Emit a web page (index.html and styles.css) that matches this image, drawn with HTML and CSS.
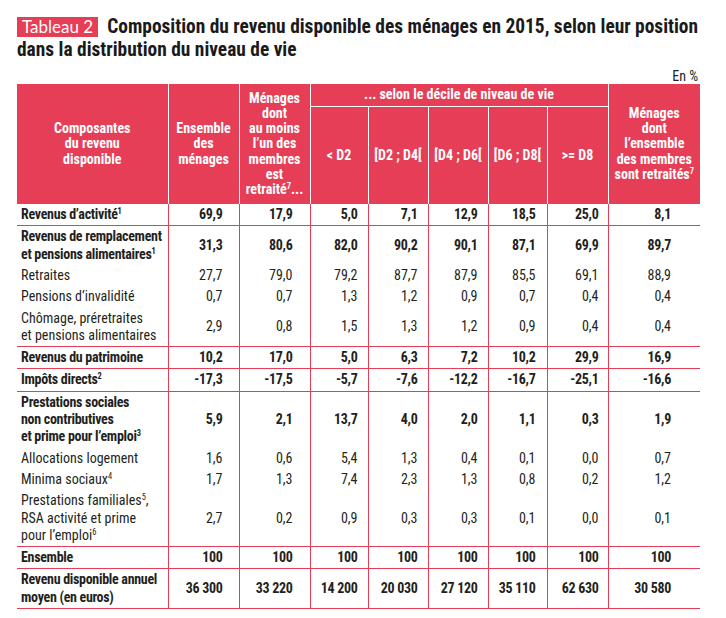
FILE: index.html
```html
<!DOCTYPE html>
<html lang="fr">
<head>
<meta charset="utf-8">
<title>Tableau 2</title>
<link rel="stylesheet" href="styles.css">
</head>
<body>
<div class="page">
  <h1 class="title"><span class="badge">Tableau 2</span>Composition du revenu disponible des ménages en 2015, selon leur position<br>dans la distribution du niveau de vie</h1>
  <div class="unit">En %</div>
  <table class="data">
    <colgroup>
      <col class="w1"><col class="w2"><col class="w3"><col class="w4"><col class="w5"><col class="w6"><col class="w7"><col class="w8"><col class="w9">
    </colgroup>
    <thead>
      <tr>
        <th rowspan="2" class="first">Composantes<br>du revenu<br>disponible</th>
        <th rowspan="2">Ensemble<br>des<br>ménages</th>
        <th rowspan="2">Ménages<br>dont<br>au moins<br>l’un des<br>membres<br>est<br>retraité<sup>7</sup>...</th>
        <th colspan="5" class="group">... selon le décile de niveau de vie</th>
        <th rowspan="2">Ménages<br>dont<br>l’ensemble<br>des membres<br>sont retraités<sup>7</sup></th>
      </tr>
      <tr class="sub">
        <th>&lt; D2</th>
        <th>[D2 ; D4[</th>
        <th>[D4 ; D6[</th>
        <th>[D6 ; D8[</th>
        <th>&gt;= D8</th>
      </tr>
    </thead>
    <tbody>
      <tr class="main sep">
        <td class="label">Revenus d’activité<sup>1</sup></td>
        <td>69,9</td><td>17,9</td><td>5,0</td><td>7,1</td><td>12,9</td><td>18,5</td><td>25,0</td><td>8,1</td>
      </tr>
      <tr class="main">
        <td class="label">Revenus de remplacement<br>et pensions alimentaires<sup>1</sup></td>
        <td>31,3</td><td>80,6</td><td>82,0</td><td>90,2</td><td>90,1</td><td>87,1</td><td>69,9</td><td>89,7</td>
      </tr>
      <tr>
        <td class="label">Retraites</td>
        <td>27,7</td><td>79,0</td><td>79,2</td><td>87,7</td><td>87,9</td><td>85,5</td><td>69,1</td><td>88,9</td>
      </tr>
      <tr>
        <td class="label">Pensions d’invalidité</td>
        <td>0,7</td><td>0,7</td><td>1,3</td><td>1,2</td><td>0,9</td><td>0,7</td><td>0,4</td><td>0,4</td>
      </tr>
      <tr class="sep">
        <td class="label">Chômage, préretraites<br>et pensions alimentaires</td>
        <td>2,9</td><td>0,8</td><td>1,5</td><td>1,3</td><td>1,2</td><td>0,9</td><td>0,4</td><td>0,4</td>
      </tr>
      <tr class="main sep">
        <td class="label">Revenus du patrimoine</td>
        <td>10,2</td><td>17,0</td><td>5,0</td><td>6,3</td><td>7,2</td><td>10,2</td><td>29,9</td><td>16,9</td>
      </tr>
      <tr class="main sep">
        <td class="label">Impôts directs<sup>2</sup></td>
        <td>-17,3</td><td>-17,5</td><td>-5,7</td><td>-7,6</td><td>-12,2</td><td>-16,7</td><td>-25,1</td><td>-16,6</td>
      </tr>
      <tr class="main">
        <td class="label">Prestations sociales<br>non contributives<br>et prime pour l’emploi<sup>3</sup></td>
        <td>5,9</td><td>2,1</td><td>13,7</td><td>4,0</td><td>2,0</td><td>1,1</td><td>0,3</td><td>1,9</td>
      </tr>
      <tr>
        <td class="label">Allocations logement</td>
        <td>1,6</td><td>0,6</td><td>5,4</td><td>1,3</td><td>0,4</td><td>0,1</td><td>0,0</td><td>0,7</td>
      </tr>
      <tr>
        <td class="label">Minima sociaux<sup>4</sup></td>
        <td>1,7</td><td>1,3</td><td>7,4</td><td>2,3</td><td>1,3</td><td>0,8</td><td>0,2</td><td>1,2</td>
      </tr>
      <tr class="sep">
        <td class="label">Prestations familiales<sup>5</sup>,<br>RSA activité et prime<br>pour l’emploi<sup>6</sup></td>
        <td>2,7</td><td>0,2</td><td>0,9</td><td>0,3</td><td>0,3</td><td>0,1</td><td>0,0</td><td>0,1</td>
      </tr>
      <tr class="main sep">
        <td class="label">Ensemble</td>
        <td>100</td><td>100</td><td>100</td><td>100</td><td>100</td><td>100</td><td>100</td><td>100</td>
      </tr>
      <tr class="main sep">
        <td class="label">Revenu disponible annuel<br>moyen (en euros)</td>
        <td>36 300</td><td>33 220</td><td>14 200</td><td>20 030</td><td>27 120</td><td>35 110</td><td>62 630</td><td>30 580</td>
      </tr>
    </tbody>
  </table>
</div>
</body>
</html>
```

FILE: styles.css
```css
body {
  margin: 0;
  background: #ffffff;
  color: #231f20;
  font-family: "Roboto Condensed", "DejaVu Sans Condensed", sans-serif;
}

.page {
  padding: 15px 0 0 17px;
  width: 683px;
}

.title {
  margin: 0;
  font-size: 19.4px;
  line-height: 23px;
  font-weight: bold;
  color: #1a1a1a;
}

.badge {
  display: inline-block;
  background: #e53e56;
  color: #ffffff;
  font-family: Lato, "Open Sans", sans-serif;
  font-weight: normal;
  font-size: 17px;
  line-height: 20px;
  padding: 0 5px;
  margin-right: 9px;
}

.unit {
  text-align: right;
  font-size: 14px;
  line-height: 15px;
  margin-top: 8px;
  padding-right: 2px;
}

table.data {
  border-collapse: collapse;
  table-layout: fixed;
  width: 683px;
  font-size: 14px;
  white-space: nowrap;
}

.w1 { width: 151px; }
.w2 { width: 71px; }
.w3 { width: 71px; }
.w4 { width: 58px; }
.w5 { width: 60px; }
.w6 { width: 60px; }
.w7 { width: 59px; }
.w8 { width: 61px; }
.w9 { width: 92px; }

th {
  background: #e53e56;
  color: #ffffff;
  font-weight: bold;
  line-height: 15.3px;
  padding: 6.5px 0;
  text-align: center;
  vertical-align: middle;
  border-left: 1px solid #ffffff;
}

th.first {
  border-left: none;
}

th.group {
  height: 22px;
  padding: 0;
}

tr.sub th {
  border-top: 1px solid #ffffff;
}

td {
  line-height: 17.3px;
  padding: 2px 0;
  text-align: right;
  vertical-align: middle;
  border-left: 1px solid #e53e56;
}

td.label {
  text-align: left;
  padding-left: 4px;
  border-left: none;
}

tr.main td {
  font-weight: bold;
  letter-spacing: -0.3px;
}

tr.sep td {
  border-bottom: 1px solid #e53e56;
}

td:nth-child(2) { padding-right: 16px; }
td:nth-child(3) { padding-right: 17px; }
td:nth-child(4) { padding-right: 10px; }
td:nth-child(5) { padding-right: 10px; }
td:nth-child(6) { padding-right: 10px; }
td:nth-child(7) { padding-right: 11px; }
td:nth-child(8) { padding-right: 9px; }
td:nth-child(9) { padding-right: 29px; }

sup {
  font-size: 0.6em;
  line-height: 0;
  vertical-align: 0.55em;
}
```
